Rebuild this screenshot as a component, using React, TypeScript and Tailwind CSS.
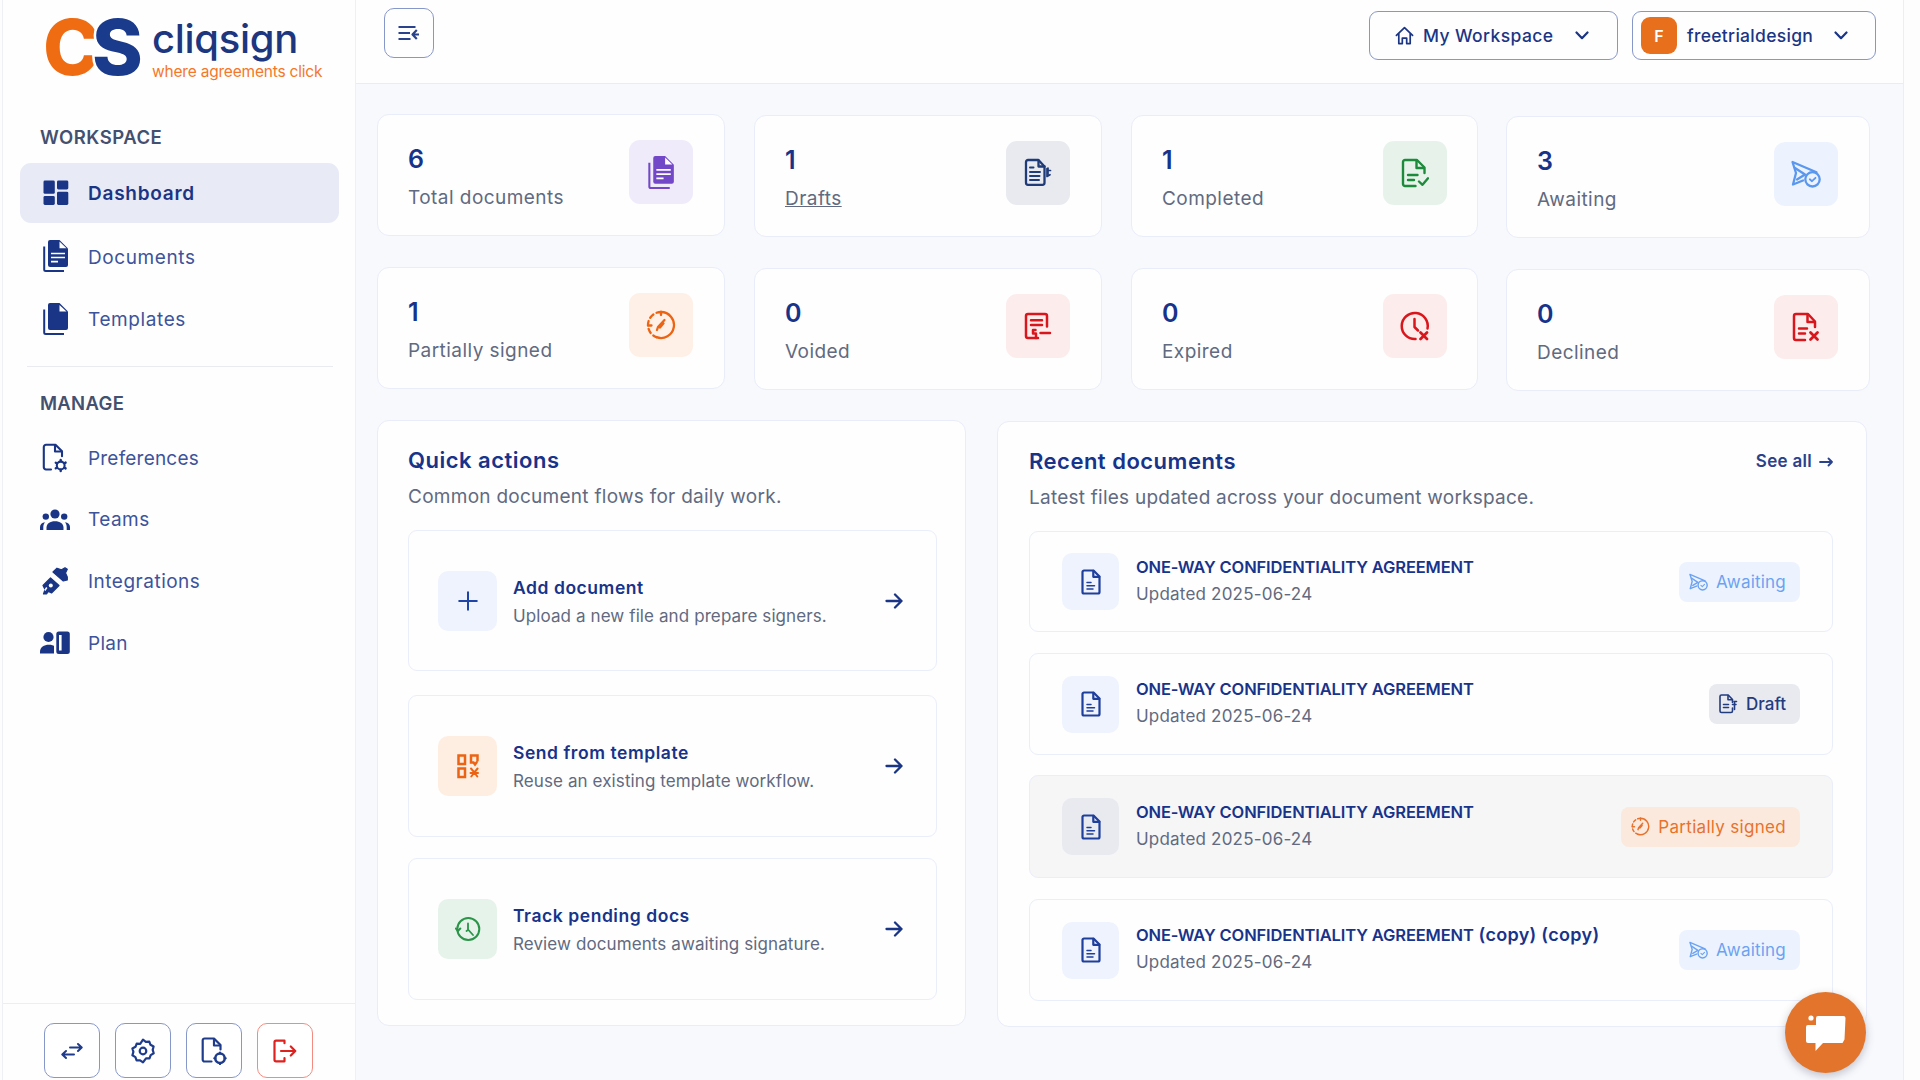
import type { ReactNode } from "react";
import clsx from "clsx";

interface IconProps {
  className?: string;
}

const stroke = {
  fill: "none",
  stroke: "currentColor",
  strokeWidth: 2,
  strokeLinecap: "round",
  strokeLinejoin: "round",
} as const;

/* ---------- sidebar icons ---------- */

const DashboardIcon = ({ className }: IconProps) => (
  <svg viewBox="0 0 26 26" className={className} fill="currentColor">
    <rect x="0.5" y="0.5" width="11.3" height="13.3" rx="1.4" />
    <rect x="14" y="0.5" width="11.3" height="9" rx="1.4" />
    <rect x="0.5" y="16" width="11.3" height="9" rx="1.4" />
    <rect x="14" y="11.7" width="11.3" height="13.3" rx="1.4" />
  </svg>
);

const DocumentsIcon = ({ className }: IconProps) => (
  <svg viewBox="0 0 26 34" className={className}>
    <path fill="currentColor" d="M7 1h9.5l8.5 8.5v16.5a2 2 0 0 1-2 2H7a2 2 0 0 1-2-2V3a2 2 0 0 1 2-2z" />
    <path d="M16.5 2.5v6.7H23.5z" fill="white" />
    <path d="M1.2 7.5V30.5a1.5 1.5 0 0 0 1.5 1.5H21" fill="none" stroke="currentColor" strokeWidth="2" />
    <path d="M8 14.5h14M8 18.5h14M8 22.6h7" stroke="white" strokeWidth="1.7" />
  </svg>
);

const TemplatesIcon = ({ className }: IconProps) => (
  <svg viewBox="0 0 26 34" className={className}>
    <path fill="currentColor" d="M7 1h9.5l8.5 8.5v16.5a2 2 0 0 1-2 2H7a2 2 0 0 1-2-2V3a2 2 0 0 1 2-2z" />
    <path d="M16.5 3v6.500H23.5z" fill="white" />
    <path d="M1.2 7.5V30.5a1.5 1.5 0 0 0 1.5 1.5H21" fill="none" stroke="currentColor" strokeWidth="2" />
  </svg>
);

const PreferencesIcon = ({ className }: IconProps) => (
  <svg viewBox="0 0 26 30" className={className} {...stroke} strokeWidth={2.1}>
    <path d="M9 26.500H4a2.200 2.200 0 0 1-2.200-2.200V4A2.200 2.200 0 0 1 4 1.800h9.500l6.500 6.500v5" />
    <path d="M13 2v6.500h6.500" />
    <circle cx="18.700" cy="22.500" r="3.900" />
    <path d="M18.700 17v1M18.700 27v1M13.800 19.700l1 .6M22.600 24.800l1 .6M13.800 25.300l1-.6M22.600 20.200l1-.6" strokeWidth="2.400" />
  </svg>
);

const TeamsIcon = ({ className }: IconProps) => (
  <svg viewBox="0 0 30 22" className={className} fill="currentColor">
    <circle cx="15" cy="5" r="4.600" />
    <circle cx="5.800" cy="7.600" r="3.200" />
    <circle cx="24.200" cy="7.600" r="3.200" />
    <path d="M6.500 21v-2.500c0-4 3.500-6.300 8.500-6.300s8.500 2.300 8.500 6.300V21z" />
    <path d="M0 21v-3c0-2.600 2-4.600 5-4.800-1.300 1.600-1.700 3.200-1.700 5V21zM30 21v-3c0-2.600-2-4.600-5-4.800 1.300 1.600 1.700 3.200 1.700 5V21z" />
  </svg>
);

const IntegrationsIcon = ({ className }: IconProps) => (
  <svg viewBox="0 0 26 28" className={className}>
    <g fill="currentColor" stroke="currentColor" strokeWidth="1.200" strokeLinejoin="round">
      <path d="M1 18.500L8.500 11l8.500 7.500-7.500 7.500-3-1.500-2 2.500H1.500l1.500-4.500z" />
      <path d="M11 5l4-3.800 4.500 1.500L23 .8l2.300 1.500L23.500 6l1.800 4v3l-4 1z" />
    </g>
    <circle cx="8.800" cy="18.500" r="2" fill="white" />
    <path d="M2.800 23.500l2-3" stroke="white" strokeWidth="1.500" />
  </svg>
);

const PlanIcon = ({ className }: IconProps) => (
  <svg viewBox="0 0 30 24" className={className}>
    <g fill="currentColor">
      <circle cx="8.500" cy="6" r="5.100" />
      <path d="M0 22.500v-2c0-4 4-6.700 9-6.700 2.500 0 4.500.6 5 1.200v7.500z" />
      <rect x="16.300" y="0.500" width="13.500" height="22.500" rx="2.500" />
    </g>
    <rect x="19" y="4" width="2.600" height="15.500" fill="white" />
  </svg>
);

/* ---------- document status icons ---------- */

const FileLinesIcon = ({ className }: IconProps) => (
  <svg viewBox="0 0 20 26" className={className} {...stroke} strokeWidth={2.2}>
    <path d="M3 1.500h9.500L18.500 7.500V23a1.500 1.500 0 0 1-1.500 1.500H3A1.500 1.500 0 0 1 1.500 23V3A1.500 1.500 0 0 1 3 1.500z" />
    <path d="M12.300 1.800v6h6" />
    <path d="M6 13.500h4M6 16.700h7.500M6 20h6" strokeWidth="1.500" />
  </svg>
);

const DraftIcon = ({ className }: IconProps) => (
  <svg viewBox="0 0 28 30" className={className} {...stroke} strokeWidth={2.3}>
    <path d="M20.500 22v2.800a2 2 0 0 1-2 2H4a2 2 0 0 1-2-2V4a2 2 0 0 1 2-2h10.500l6 6.500V22z" />
    <path d="M14.500 2.500v6h6" />
    <path d="M6 9.500h3.500M6 14h10M6 18h9.500M6 22h9" strokeWidth="2" />
    <path d="M23 10.500v8l3-1.800M23.500 12.500h3M24 10v6" strokeWidth="1.700" />
  </svg>
);

const DraftSmallIcon = ({ className }: IconProps) => (
  <svg viewBox="0 0 19 20" className={className} {...stroke} strokeWidth={1.6}>
    <path d="M13.500 14v3a1.500 1.500 0 0 1-1.500 1.500H2.500A1.500 1.500 0 0 1 1 17V2.500A1.500 1.500 0 0 1 2.500 1h6.700l4.300 4.500v3" />
    <path d="M9 1.500v4.300h4" />
    <path d="M4.500 10.500h5M4.500 13.500h5" />
    <path d="M15 7.500h2.500M13.500 10.500h3.500M15.500 7.500v8" />
  </svg>
);

const CompletedIcon = ({ className }: IconProps) => (
  <svg viewBox="0 0 28 30" className={className} {...stroke} strokeWidth={2.4}>
    <path d="M14.500 28H4a2 2 0 0 1-2-2V4a2 2 0 0 1 2-2h12l7.500 7.500V15" />
    <path d="M15.500 2.500V10h7.500" />
    <path d="M7 17h9.500M7 22h6" />
    <path d="M18 23.500l3.500 3.300 5.500-6.500" />
  </svg>
);

const DeclinedIcon = ({ className }: IconProps) => (
  <svg viewBox="0 0 28 30" className={className} {...stroke} strokeWidth={2.5}>
    <path d="M13 28H4a2 2 0 0 1-2-2V4a2 2 0 0 1 2-2h12l7 7.500V15" />
    <path d="M15.500 2.500V10h7" />
    <path d="M7 16.500h8M7 21.500h6" />
    <path d="M18.500 20.500l7 7M25.500 20.500l-7 7" strokeWidth="2.800" />
  </svg>
);

const AwaitingIcon = ({ className }: IconProps) => (
  <svg viewBox="0 0 30 28" className={className} {...stroke} strokeWidth={2.3}>
    <path d="M12 20.500L2 24.500 5 13 1.500 2l24 10.200" />
    <path d="M4 8l10 6.500-8 5" />
    <circle cx="21.500" cy="19.300" r="7.200" />
    <path d="M18.800 19.300l2.200 1.900 3.500-3.400" strokeWidth="1.800" />
  </svg>
);

const PartialIcon = ({ className }: IconProps) => (
  <svg viewBox="0 0 30 30" className={className} {...stroke} strokeWidth={2.3}>
    <path d="M15 2a13 13 0 1 1-4.500 25.200" />
    <path d="M15 2a13 13 0 0 0-13 13 13 13 0 0 0 8.500 12.200" strokeDasharray="4.500 3.600" />
    <path d="M15 2v3M2 15.500h3.500" />
    <path d="M11 20l1-3 6.500-7M14 17.500l3.500-4.200" />
  </svg>
);

const VoidedIcon = ({ className }: IconProps) => (
  <svg viewBox="0 0 28 28" className={className} {...stroke} strokeWidth={2.5}>
    <path d="M14 26H4a2 2 0 0 1-2-2V4a2 2 0 0 1 2-2h17a2 2 0 0 1 2 2v10.500" />
    <path d="M7 8.300h11M7 13h11M11.500 18H9v3.500h3V26M16.500 21h9.500" />
  </svg>
);

const ExpiredIcon = ({ className }: IconProps) => (
  <svg viewBox="0 0 30 30" className={className} {...stroke} strokeWidth={2.5}>
    <path d="M15.500 28A13 13 0 1 1 27.500 17.500" />
    <path d="M14.500 8v8l3.500 3.500" />
    <path d="M20.500 21.500l6.500 6.500M27 21.500l-6.500 6.500" strokeWidth="2.800" />
  </svg>
);

const TemplateGridIcon = ({ className }: IconProps) => (
  <svg viewBox="0 0 24 26" className={className} {...stroke} strokeWidth={2.5} strokeLinejoin="miter">
    <path d="M2.500 2.500h6.500v8.500H2.500zM2.500 15.500h6.500v8.500H2.500z" />
    <path d="M21.500 7.500v-5h-6.500v7h2.500l1.500 2 1.500-2" />
    <path d="M15 15.500l3.300 4 3.300-4M14.500 20h7.500M18.300 19.500l-3 4M18.300 19.500l3 4" strokeWidth="2" />
  </svg>
);

const TrackIcon = ({ className }: IconProps) => (
  <svg viewBox="0 0 26 26" className={className} {...stroke}>
    <circle cx="13.300" cy="13" r="11" />
    <path d="M0.800 12.500l2 2.500 2.500-2.500" />
    <path d="M13 7.500v6.500l-1.500 1M13.500 14l4.500 5" strokeWidth="1.800" />
  </svg>
);

const PlusIcon = ({ className }: IconProps) => (
  <svg viewBox="0 0 20 20" className={className} {...stroke}>
    <path d="M10 1.200v17.600M1.200 10h17.600" />
  </svg>
);

const ArrowIcon = ({ className }: IconProps) => (
  <svg viewBox="0 0 18 18" className={className} {...stroke} strokeWidth={2.3}>
    <path d="M1.500 9h15M10 2.500L16.500 9 10 15.500" />
  </svg>
);

/* ---------- chrome icons ---------- */

const ChevronIcon = ({ className }: IconProps) => (
  <svg viewBox="0 0 14 9" className={className} {...stroke} strokeWidth={2.2}>
    <path d="M1.500 1.500L7 7.200l5.500-5.700" />
  </svg>
);

const HomeIcon = ({ className }: IconProps) => (
  <svg viewBox="0 0 20 20" className={className} {...stroke} strokeWidth={1.8}>
    <path d="M1.500 9.800L10 1.800l8.500 8M4 8v10.500h3.700v-5.700h4.600v5.700H16V8" />
  </svg>
);

const CollapseIcon = ({ className }: IconProps) => (
  <svg viewBox="0 0 22 16" className={className} {...stroke} strokeWidth={2.2} strokeLinecap="butt">
    <path d="M0.500 2h17M0.500 8h11.500M0.500 14h12" />
    <path d="M21 9.500h-6.500M18.800 5L14.500 9.500l4.300 4.500" />
  </svg>
);

const SwapIcon = ({ className }: IconProps) => (
  <svg viewBox="0 0 22 18" className={className} {...stroke}>
    <path d="M9 5.500h11.500M17 2l3.700 3.500L17 9" />
    <path d="M13 12.500H1.500M5 9l-3.700 3.500L5 16" />
  </svg>
);

const GearIcon = ({ className }: IconProps) => (
  <svg viewBox="0 0 26 26" className={className} {...stroke} strokeWidth={2.2}>
    <path d="M13 1.700l2.800 2.100 3.500-.2 1.200 3.200 3.100 1.700-.9 3.400 1 3.400-3 1.800-1.200 3.300-3.500-.1L13 24.300l-2.900-2-3.500.1-1.200-3.300-3-1.800 1-3.400-1-3.400 3.100-1.700 1.200-3.200 3.500.2z" />
    <circle cx="13" cy="13" r="3.300" />
  </svg>
);

const FileAddIcon = ({ className }: IconProps) => (
  <svg viewBox="0 0 26 28" className={className} {...stroke} strokeWidth={2.2}>
    <path d="M10.500 24.500H3.500a1.800 1.800 0 0 1-1.800-1.800V3.300a1.800 1.800 0 0 1 1.800-1.800H13l6.500 6.500v4.500" />
    <path d="M13 2v6.500h6" />
    <circle cx="19" cy="21.300" r="4.700" strokeWidth="2.500" />
    <path d="M19 15.500v1M19 26v1M13.300 21.300h1M23.700 21.300h1" />
  </svg>
);

const LogoutIcon = ({ className }: IconProps) => (
  <svg viewBox="0 0 24 24" className={className} {...stroke} strokeWidth={2.2}>
    <path d="M11.500 1.700H3a1.500 1.500 0 0 0-1.500 1.500v17.600A1.500 1.500 0 0 0 3 22.300h8.500V19M11.500 1.700v2.500" />
    <path d="M8 12h14M17.800 7.500l4.500 4.500-4.500 4.500" />
  </svg>
);

const ChatIcon = ({ className }: IconProps) => (
  <svg viewBox="0 0 40 36" className={className} fill="white">
    <circle cx="5" cy="3" r="2.600" />
    <path d="M12 1h25.500a2 2 0 0 1 2 2l-1 21.500-2 3.500H17l-7.500 8v-8H2a2 2 0 0 1-2-2V12a2 2 0 0 1 2-2h8V3a2 2 0 0 1 2-2z" />
  </svg>
);

const Logo = () => (
  <div className="flex h-[66px] gap-[10px] pl-[41px]">
    <svg viewBox="0 0 98 66" className="h-[66px] w-[98px] shrink-0 overflow-visible">
      <text y="62" fontFamily="Inter" fontWeight="800" fontSize="77">
        <tspan x="-1" fill="#f06c12">C</tspan>
        <tspan x="48" fill="#1a3a8c" stroke="white" strokeWidth="5" paintOrder="stroke">S</tspan>
      </text>
    </svg>
    <div className="pt-[6px]">
      <p className="text-[40px] font-medium leading-[40px] tracking-[-0.3px] text-[#1c3680]">cliqsign</p>
      <p className="mt-[3px] whitespace-nowrap text-[15.5px] leading-[20px] tracking-[-0.2px] text-[#f5772a]">where agreements click</p>
    </div>
  </div>
);

/* ---------- data ---------- */

const workspaceItems = [
  { label: "Dashboard", icon: DashboardIcon, iconClass: "w-[26px] h-[26px]", className: "h-[60px] bg-[#e8ebf6] font-semibold text-[#1a3585]", active: true },
  { label: "Documents", icon: DocumentsIcon, iconClass: "w-[26px] h-[34px]", className: "h-[66px] text-[#3d539b]", active: false },
  { label: "Templates", icon: TemplatesIcon, iconClass: "w-[26px] h-[34px]", className: "h-[59px] text-[#3d539b]", active: false },
];

const manageItems = [
  { label: "Preferences", icon: PreferencesIcon, iconClass: "w-[26px] h-[30px]", tracking: "tracking-[0.2px]" },
  { label: "Teams", icon: TeamsIcon, iconClass: "w-[30px] h-[22px]", tracking: "tracking-[0.45px]" },
  { label: "Integrations", icon: IntegrationsIcon, iconClass: "w-[26px] h-[28px]", tracking: "tracking-[0.5px]" },
  { label: "Plan", icon: PlanIcon, iconClass: "w-[30px] h-[24px]", tracking: "tracking-[0.3px]" },
];

const stats = [
  { value: 6, label: "Total documents", icon: DocumentsIcon, iconClass: "w-[27px] h-[35px]", tone: "bg-[#f0ebfb] text-[#7247c8]", offset: "pr-[31px]" },
  { value: 1, label: "Drafts", icon: DraftIcon, iconClass: "w-[28px] h-[30px]", tone: "bg-[#e8eaef] text-[#1f3b78]", offset: "mt-px pr-[31px]", underline: true },
  { value: 1, label: "Completed", icon: CompletedIcon, iconClass: "w-[28px] h-[30px]", tone: "bg-[#e7f3ea] text-[#1d8b3c]", offset: "mt-px pr-[30px]" },
  { value: 3, label: "Awaiting", icon: AwaitingIcon, iconClass: "w-[30px] h-[28px]", tone: "bg-[#edf3fe] text-[#5a97ee]", offset: "mt-[2px] pr-[31px]" },
  { value: 1, label: "Partially signed", icon: PartialIcon, iconClass: "w-[30px] h-[30px]", tone: "bg-[#fef0e6] text-[#ec6413]", offset: "pr-[31px]" },
  { value: 0, label: "Voided", icon: VoidedIcon, iconClass: "w-[28px] h-[28px]", tone: "bg-[#fdecec] text-[#d9161c]", offset: "mt-px pr-[31px]" },
  { value: 0, label: "Expired", icon: ExpiredIcon, iconClass: "w-[30px] h-[30px]", tone: "bg-[#fdecec] text-[#d9161c]", offset: "mt-px pr-[30px]" },
  { value: 0, label: "Declined", icon: DeclinedIcon, iconClass: "w-[28px] h-[30px]", tone: "bg-[#fdecec] text-[#d9161c]", offset: "mt-[2px] pr-[31px]" },
];

const quickActions = [
  { title: "Add document", text: "Upload a new file and prepare signers.", icon: PlusIcon, iconClass: "w-5 h-5", tone: "bg-[#eef3fd] text-[#1f44a8]", className: "h-[141px]" },
  { title: "Send from template", text: "Reuse an existing template workflow.", icon: TemplateGridIcon, iconClass: "w-[24px] h-[26px]", tone: "bg-[#feeee2] text-[#ec6413]", className: "mt-[24px] h-[142px]" },
  { title: "Track pending docs", text: "Review documents awaiting signature.", icon: TrackIcon, iconClass: "w-[26px] h-[26px]", tone: "bg-[#e6f3ea] text-[#2a9448]", className: "mt-[21px] h-[142px]" },
];

const badges = {
  awaiting: { label: "Awaiting", icon: AwaitingIcon, iconClass: "w-[19px] h-[18px]", tone: "bg-[#edf3fe] text-[#6ba3f2] tracking-[0.2px]" },
  draft: { label: "Draft", icon: DraftSmallIcon, iconClass: "w-[19px] h-[20px]", tone: "bg-[#e8eaf0] text-[#233c80] font-medium" },
  partial: { label: "Partially signed", icon: PartialIcon, iconClass: "w-[19px] h-[19px]", tone: "bg-[#fbe9de] text-[#e8722c] tracking-[0.3px]" },
};

const recentDocs: { title: string; suffix?: string; badge: keyof typeof badges; className: string; hovered?: boolean }[] = [
  { title: "ONE-WAY CONFIDENTIALITY AGREEMENT", badge: "awaiting", className: "h-[101px]" },
  { title: "ONE-WAY CONFIDENTIALITY AGREEMENT", badge: "draft", className: "mt-[21px] h-[102px]" },
  { title: "ONE-WAY CONFIDENTIALITY AGREEMENT", badge: "partial", className: "mt-[20px] h-[103px]", hovered: true },
  { title: "ONE-WAY CONFIDENTIALITY AGREEMENT", suffix: "(copy) (copy)", badge: "awaiting", className: "mt-[21px] h-[102px]" },
];

/* ---------- layout ---------- */

const SquareButton = ({ children, danger }: { children: ReactNode; danger?: boolean }) => (
  <button
    className={clsx(
      "flex h-[55px] w-[56px] items-center justify-center rounded-[10px] border-[1.5px] bg-white",
      danger ? "border-[#f58a80] text-[#dc2320]" : "border-[#8797c9] text-[#1f3c8c]"
    )}
  >
    {children}
  </button>
);

function Sidebar() {
  return (
    <aside className="flex w-[354px] shrink-0 flex-col border-x border-[#eff0f5] bg-[#fefefe]">
      <div className="pt-[13px]">
        <Logo />
      </div>

      <p className="mt-[45px] pl-[37px] text-[18.5px] font-semibold leading-[26px] tracking-[0.5px] text-[#43506f]">WORKSPACE</p>
      <nav className="mt-[13px] pl-[17px] pr-[16px]">
        {workspaceItems.map(({ label, icon: Icon, iconClass, className, active }) => (
          <a key={label} className={clsx("flex items-center rounded-[11px] pl-[23px] text-[19px]", className)}>
            <span className="flex w-[26px] justify-center text-[#1a3585]">
              <Icon className={iconClass} />
            </span>
            <span className={clsx("ml-[19px]", active ? "pt-[2px] tracking-[0.75px]" : "pt-[4px] tracking-[0.6px]")}>{label}</span>
          </a>
        ))}
      </nav>

      <div className="ml-[24px] mr-[22px] mt-[18px] h-px bg-[#e9ebf0]" />

      <p className="mt-[23px] pl-[37px] text-[18.5px] font-semibold leading-[26px] tracking-[0.3px] text-[#43506f]">MANAGE</p>
      <nav className="mt-[11px] pl-[36px]">
        {manageItems.map(({ label, icon: Icon, iconClass, tracking }) => (
          <a key={label} className="flex h-[61.7px] items-center text-[19px] text-[#3d539b]">
            <span className="flex w-[31px] justify-center text-[#1a3585]">
              <Icon className={iconClass} />
            </span>
            <span className={clsx("ml-[18px] pt-[2px]", tracking)}>{label}</span>
          </a>
        ))}
      </nav>

      <div className="mt-auto flex h-[77px] gap-[15px] border-t border-[#eceef2] pl-[41px] pt-[19px]">
        <SquareButton>
          <SwapIcon className="h-[18px] w-[22px]" />
        </SquareButton>
        <SquareButton>
          <GearIcon className="h-[26px] w-[26px]" />
        </SquareButton>
        <SquareButton>
          <FileAddIcon className="h-[28px] w-[26px]" />
        </SquareButton>
        <SquareButton danger>
          <LogoutIcon className="h-[24px] w-[24px]" />
        </SquareButton>
      </div>
    </aside>
  );
}

function Header() {
  return (
    <header className="flex h-[84px] shrink-0 border-b border-[#eaecf2] bg-[#fefefe] pl-[28px] pr-[27px]">
      <button className="mt-[8px] flex h-[50px] w-[50px] items-center justify-center rounded-[10px] border-[1.5px] border-[#8797c9] text-[#2a428c]">
        <CollapseIcon className="h-[16px] w-[22px]" />
      </button>
      <div className="ml-auto mt-[11px] flex gap-[14px] text-[17.5px] font-medium text-[#1a3585]">
        <button className="flex h-[49px] w-[249px] items-center rounded-[9px] border-[1.5px] border-[#8797c9] pl-[25px]">
          <HomeIcon className="h-[19px] w-[19px]" />
          <span className="ml-[9px] w-[131px] whitespace-nowrap pt-px text-left tracking-[0.4px]">My Workspace</span>
          <ChevronIcon className="ml-[21px] h-[9px] w-[14px]" />
        </button>
        <button className="flex h-[49px] w-[244px] items-center rounded-[9px] border-[1.5px] border-[#8797c9] pl-[8px]">
          <span className="flex h-[37px] w-[36px] items-center justify-center rounded-[9px] bg-[#e86f1c] text-[16px] font-semibold text-white">F</span>
          <span className="ml-[10px] w-[127px] whitespace-nowrap pt-px text-left tracking-[0.3px]">freetrialdesign</span>
          <ChevronIcon className="ml-[20px] h-[9px] w-[14px]" />
        </button>
      </div>
    </header>
  );
}

function StatCards() {
  return (
    <section className="grid grid-cols-[348px_348px_347px_363px] grid-rows-[123px_122px] gap-x-[29px] gap-y-[30px]">
      {stats.map(({ value, label, icon: Icon, iconClass, tone, offset, underline }, i) => (
        <div
          key={label}
          className={clsx("flex h-[122px] items-start justify-between rounded-[12px] border-[1.5px] border-[#e9edf9] bg-[#fefefe] pl-[30px]", i % 4 === 3 && "-ml-px", offset)}
        >
          <div className="pt-[29px]">
            <p className="text-[25px] font-semibold leading-[30px] text-[#17338a]">{value}</p>
            <p className={clsx("mt-[10px] text-[19px] leading-[28px] tracking-[0.45px] text-[#616a80]", underline && "underline underline-offset-1")}>{label}</p>
          </div>
          <div className={clsx("mt-[25px] flex h-[64px] w-[64px] items-center justify-center rounded-[11px]", tone)}>
            <Icon className={iconClass} />
          </div>
        </div>
      ))}
    </section>
  );
}

function QuickActions() {
  return (
    <section className="h-[606px] w-[589px] rounded-[12px] border-[1.5px] border-[#e9edf9] bg-[#fefefe] pl-[30px] pt-[25px]">
      <h2 className="text-[22px] font-semibold leading-[28px] tracking-[0.5px] text-[#17338a]">Quick actions</h2>
      <p className="mt-[11px] text-[19px] leading-[24px] tracking-[0.27px] text-[#616a80]">Common document flows for daily work.</p>
      <div className="mt-[21px] w-[529px]">
        {quickActions.map(({ title, text, icon: Icon, iconClass, tone, className }) => (
          <a key={title} className={clsx("flex items-center rounded-[9px] border-[1.5px] border-[#e9eefa] pl-[29px] pr-[33px]", className)}>
            <span className={clsx("flex h-[60px] w-[59px] items-center justify-center rounded-[10px]", tone)}>
              <Icon className={iconClass} />
            </span>
            <span className="ml-[16px] pt-[2px]">
              <span className="block text-[17.5px] font-semibold leading-[28px] tracking-[0.55px] text-[#17338a]">{title}</span>
              <span className="block text-[17px] leading-[28px] tracking-[0.1px] text-[#616a80]">{text}</span>
            </span>
            <ArrowIcon className="ml-auto h-[18px] w-[18px] text-[#1a3585]" />
          </a>
        ))}
      </div>
    </section>
  );
}

function RecentDocuments() {
  return (
    <section className="mt-px h-[606px] w-[870px] rounded-[12px] border-[1.5px] border-[#e9edf9] bg-[#fefefe] pl-[31px] pr-[33px] pt-[25px]">
      <div className="flex items-center justify-between">
        <h2 className="text-[22px] font-semibold leading-[28px] tracking-[0.5px] text-[#17338a]">Recent documents</h2>
        <a className="flex items-center pt-[2px] text-[17px] font-semibold tracking-[0.3px] text-[#2a428c]">
          See all
          <svg viewBox="0 0 14 10" className="ml-[7px] h-[10px] w-[14px]" {...stroke} strokeWidth={1.8}>
            <path d="M1 5h12M9.500 1.500L13 5 9.500 8.500" />
          </svg>
        </a>
      </div>
      <p className="mt-[11px] text-[19px] leading-[24px] tracking-[0.24px] text-[#616a80]">Latest files updated across your document workspace.</p>
      <div className="mt-[21px]">
        {recentDocs.map(({ title, suffix, badge, className, hovered }, i) => {
          const { label, icon: BadgeIcon, iconClass, tone } = badges[badge];
          return (
            <div key={i} className={clsx("flex items-center rounded-[9px] border-[1.5px] border-[#e9eefa] px-[32px]", hovered && "bg-[#f6f6f7]", className)}>
              <span className={clsx("flex h-[57px] w-[57px] items-center justify-center rounded-[10px] text-[#1f3f9c]", hovered ? "bg-[#e8eaf0]" : "bg-[#eef3fd]")}>
                <FileLinesIcon className="h-[26px] w-[20px]" />
              </span>
              <div className="ml-[17px] pb-[2px]">
                <p className="h-[27px] whitespace-nowrap text-[16.5px] font-semibold leading-[27px] tracking-[-0.14px] text-[#17338a]">
                  {title}
                  {suffix && <span className="text-[18px] leading-[24px] tracking-[0.3px]"> {suffix}</span>}
                </p>
                <p className="text-[17px] leading-[27px] tracking-[0.2px] text-[#616a80]">Updated 2025-06-24</p>
              </div>
              <span className={clsx("ml-auto flex h-[40px] items-center gap-[8px] rounded-[8px] pl-[10px] pr-[14px] text-[17px]", tone)}>
                <BadgeIcon className={iconClass} />
                <span className="pt-[2px]">{label}</span>
              </span>
            </div>
          );
        })}
      </div>
    </section>
  );
}

export default function App() {
  return (
    <div className="relative flex h-[1080px] w-[1920px] overflow-hidden bg-[#fdfdfe] pl-[2px] font-['Inter',sans-serif]">
      <Sidebar />
      <div className="flex w-[1548px] shrink-0 flex-col border-r border-[#eceef5] bg-[#f8f9fd]">
        <Header />
        <main className="pl-[21px] pt-[30px]">
          <StatCards />
          <div className="mt-[31px] flex gap-[31px]">
            <QuickActions />
            <RecentDocuments />
          </div>
        </main>
      </div>

      <button className="absolute left-[1785px] top-[992px] flex h-[81px] w-[81px] items-center justify-center rounded-full bg-[#e2752b] shadow-[0_3px_8px_rgba(60,60,90,0.3)]">
        <ChatIcon className="h-[36px] w-[40px]" />
      </button>
    </div>
  );
}
